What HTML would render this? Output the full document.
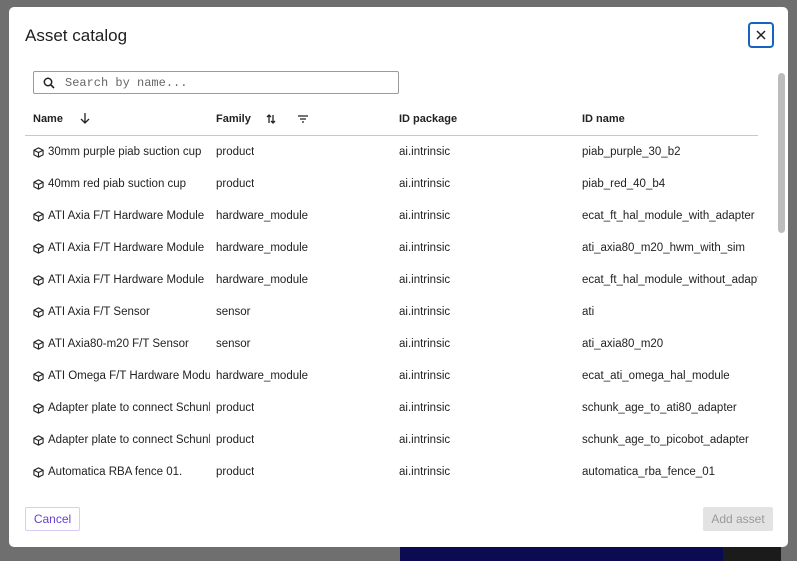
<!DOCTYPE html>
<html><head><style>
*{box-sizing:border-box;margin:0;padding:0}
body{width:797px;height:561px;overflow:hidden;background:#6f6f6f;font-family:"Liberation Sans",sans-serif;position:relative}
.blue{position:absolute;left:400px;top:540px;width:323px;height:21px;background:#0b0b52}
.dark{position:absolute;left:723px;top:540px;width:58px;height:21px;background:#1b1b1b}
.dlg{position:absolute;left:9px;top:7px;width:779px;height:540px;background:#fff;border-radius:5px;overflow:hidden}
h1{position:absolute;left:16px;top:19px;font-size:17px;font-weight:normal;color:#1f1f1f}
.close{position:absolute;left:739px;top:15px;width:26px;height:26px;border:2px solid #1565c0;border-radius:4px}
.search{position:absolute;left:24px;top:64px;width:366px;height:23px;border:1px solid #9a9a9a;border-radius:2px;font-family:"Liberation Mono",monospace;font-size:12px;color:#666;padding:4px 0 0 31px}
.hd{position:absolute;top:106px;font-size:11px;font-weight:bold;color:#222}
.line{position:absolute;left:16px;top:128px;width:733px;height:1px;background:#c8c8c8}
.row{position:absolute;left:0;width:749px;height:32px;font-size:11.5px;color:#222;white-space:nowrap}
.row span{position:absolute;top:1px;overflow:hidden}
.c1{left:39px;width:162px}.c2{left:207px}.c3{left:390px}.c4{left:573px;width:176px}
.ic{position:absolute;left:24px;top:2px}
.sb{position:absolute;left:769px;top:66px;width:7px;height:160px;background:#bcbcbc;border-radius:4px}
.cancel{position:absolute;left:16px;top:500px;width:55px;height:24px;border:1px solid #d9ccf5;border-radius:2px;color:#6a3fd8;font-size:12px;text-align:center;line-height:22px}
.add{position:absolute;left:694px;top:500px;width:70px;height:24px;background:#e3e3e3;border-radius:2px;color:#9a9a9a;font-size:12px;text-align:center;line-height:24px}
</style></head><body>
<div class="blue"></div><div class="dark"></div>
<div class="dlg">
<h1>Asset catalog</h1>
<div class="close"><svg width="22" height="22" viewBox="0 0 22 22"><path d="M7 7L15 15M15 7L7 15" stroke="#222" stroke-width="1.5"/></svg></div>
<div class="search">Search by name...</div>
<svg style="position:absolute;left:34px;top:70px" width="12" height="12" viewBox="0 0 12 12"><circle cx="5" cy="5" r="3.7" fill="none" stroke="#222" stroke-width="1.5"/><path d="M7.8 7.8L11 11" stroke="#222" stroke-width="1.6"/></svg>
<div class="hd" style="left:24px">Name</div>
<svg style="position:absolute;left:70px;top:105px" width="12" height="13" viewBox="0 0 12 13"><path d="M6 1V11M2 7L6 11L10 7" fill="none" stroke="#222" stroke-width="1.3"/></svg>
<div class="hd" style="left:207px">Family</div>
<svg style="position:absolute;left:256px;top:106px" width="12" height="12" viewBox="0 0 12 12"><path d="M4 10V2M2 4L4 2L6 4M8 2V10M6 8L8 10L10 8" fill="none" stroke="#222" stroke-width="1.3"/></svg>
<svg style="position:absolute;left:288px;top:107px" width="12" height="10" viewBox="0 0 12 10"><path d="M1 2H11M3 5H9M5 8H7" stroke="#222" stroke-width="1.2"/></svg>
<div class="hd" style="left:390px">ID package</div>
<div class="hd" style="left:573px">ID name</div>
<div class="line"></div>
<div class="row" style="top:138px"><svg class="ic" width="11" height="11" viewBox="0 0 12 12"><path d="M6 1L11 3.5V8.5L6 11L1 8.5V3.5ZM1 3.5L6 6L11 3.5M6 6V11" fill="none" stroke="#222" stroke-width="1.2"/></svg><span class="c1">30mm purple piab suction cup</span><span class="c2">product</span><span class="c3">ai.intrinsic</span><span class="c4">piab_purple_30_b2</span></div>
<div class="row" style="top:170px"><svg class="ic" width="11" height="11" viewBox="0 0 12 12"><path d="M6 1L11 3.5V8.5L6 11L1 8.5V3.5ZM1 3.5L6 6L11 3.5M6 6V11" fill="none" stroke="#222" stroke-width="1.2"/></svg><span class="c1">40mm red piab suction cup</span><span class="c2">product</span><span class="c3">ai.intrinsic</span><span class="c4">piab_red_40_b4</span></div>
<div class="row" style="top:202px"><svg class="ic" width="11" height="11" viewBox="0 0 12 12"><path d="M6 1L11 3.5V8.5L6 11L1 8.5V3.5ZM1 3.5L6 6L11 3.5M6 6V11" fill="none" stroke="#222" stroke-width="1.2"/></svg><span class="c1">ATI Axia F/T Hardware Module</span><span class="c2">hardware_module</span><span class="c3">ai.intrinsic</span><span class="c4">ecat_ft_hal_module_with_adapter</span></div>
<div class="row" style="top:234px"><svg class="ic" width="11" height="11" viewBox="0 0 12 12"><path d="M6 1L11 3.5V8.5L6 11L1 8.5V3.5ZM1 3.5L6 6L11 3.5M6 6V11" fill="none" stroke="#222" stroke-width="1.2"/></svg><span class="c1">ATI Axia F/T Hardware Module</span><span class="c2">hardware_module</span><span class="c3">ai.intrinsic</span><span class="c4">ati_axia80_m20_hwm_with_sim</span></div>
<div class="row" style="top:266px"><svg class="ic" width="11" height="11" viewBox="0 0 12 12"><path d="M6 1L11 3.5V8.5L6 11L1 8.5V3.5ZM1 3.5L6 6L11 3.5M6 6V11" fill="none" stroke="#222" stroke-width="1.2"/></svg><span class="c1">ATI Axia F/T Hardware Module</span><span class="c2">hardware_module</span><span class="c3">ai.intrinsic</span><span class="c4">ecat_ft_hal_module_without_adapter</span></div>
<div class="row" style="top:298px"><svg class="ic" width="11" height="11" viewBox="0 0 12 12"><path d="M6 1L11 3.5V8.5L6 11L1 8.5V3.5ZM1 3.5L6 6L11 3.5M6 6V11" fill="none" stroke="#222" stroke-width="1.2"/></svg><span class="c1">ATI Axia F/T Sensor</span><span class="c2">sensor</span><span class="c3">ai.intrinsic</span><span class="c4">ati</span></div>
<div class="row" style="top:330px"><svg class="ic" width="11" height="11" viewBox="0 0 12 12"><path d="M6 1L11 3.5V8.5L6 11L1 8.5V3.5ZM1 3.5L6 6L11 3.5M6 6V11" fill="none" stroke="#222" stroke-width="1.2"/></svg><span class="c1">ATI Axia80-m20 F/T Sensor</span><span class="c2">sensor</span><span class="c3">ai.intrinsic</span><span class="c4">ati_axia80_m20</span></div>
<div class="row" style="top:362px"><svg class="ic" width="11" height="11" viewBox="0 0 12 12"><path d="M6 1L11 3.5V8.5L6 11L1 8.5V3.5ZM1 3.5L6 6L11 3.5M6 6V11" fill="none" stroke="#222" stroke-width="1.2"/></svg><span class="c1">ATI Omega F/T Hardware Module</span><span class="c2">hardware_module</span><span class="c3">ai.intrinsic</span><span class="c4">ecat_ati_omega_hal_module</span></div>
<div class="row" style="top:394px"><svg class="ic" width="11" height="11" viewBox="0 0 12 12"><path d="M6 1L11 3.5V8.5L6 11L1 8.5V3.5ZM1 3.5L6 6L11 3.5M6 6V11" fill="none" stroke="#222" stroke-width="1.2"/></svg><span class="c1">Adapter plate to connect Schunk</span><span class="c2">product</span><span class="c3">ai.intrinsic</span><span class="c4">schunk_age_to_ati80_adapter</span></div>
<div class="row" style="top:426px"><svg class="ic" width="11" height="11" viewBox="0 0 12 12"><path d="M6 1L11 3.5V8.5L6 11L1 8.5V3.5ZM1 3.5L6 6L11 3.5M6 6V11" fill="none" stroke="#222" stroke-width="1.2"/></svg><span class="c1">Adapter plate to connect Schunk</span><span class="c2">product</span><span class="c3">ai.intrinsic</span><span class="c4">schunk_age_to_picobot_adapter</span></div>
<div class="row" style="top:458px"><svg class="ic" width="11" height="11" viewBox="0 0 12 12"><path d="M6 1L11 3.5V8.5L6 11L1 8.5V3.5ZM1 3.5L6 6L11 3.5M6 6V11" fill="none" stroke="#222" stroke-width="1.2"/></svg><span class="c1">Automatica RBA fence 01.</span><span class="c2">product</span><span class="c3">ai.intrinsic</span><span class="c4">automatica_rba_fence_01</span></div>
<div class="sb"></div>
<div class="cancel">Cancel</div>
<div class="add">Add asset</div>
</div>
</body></html>
